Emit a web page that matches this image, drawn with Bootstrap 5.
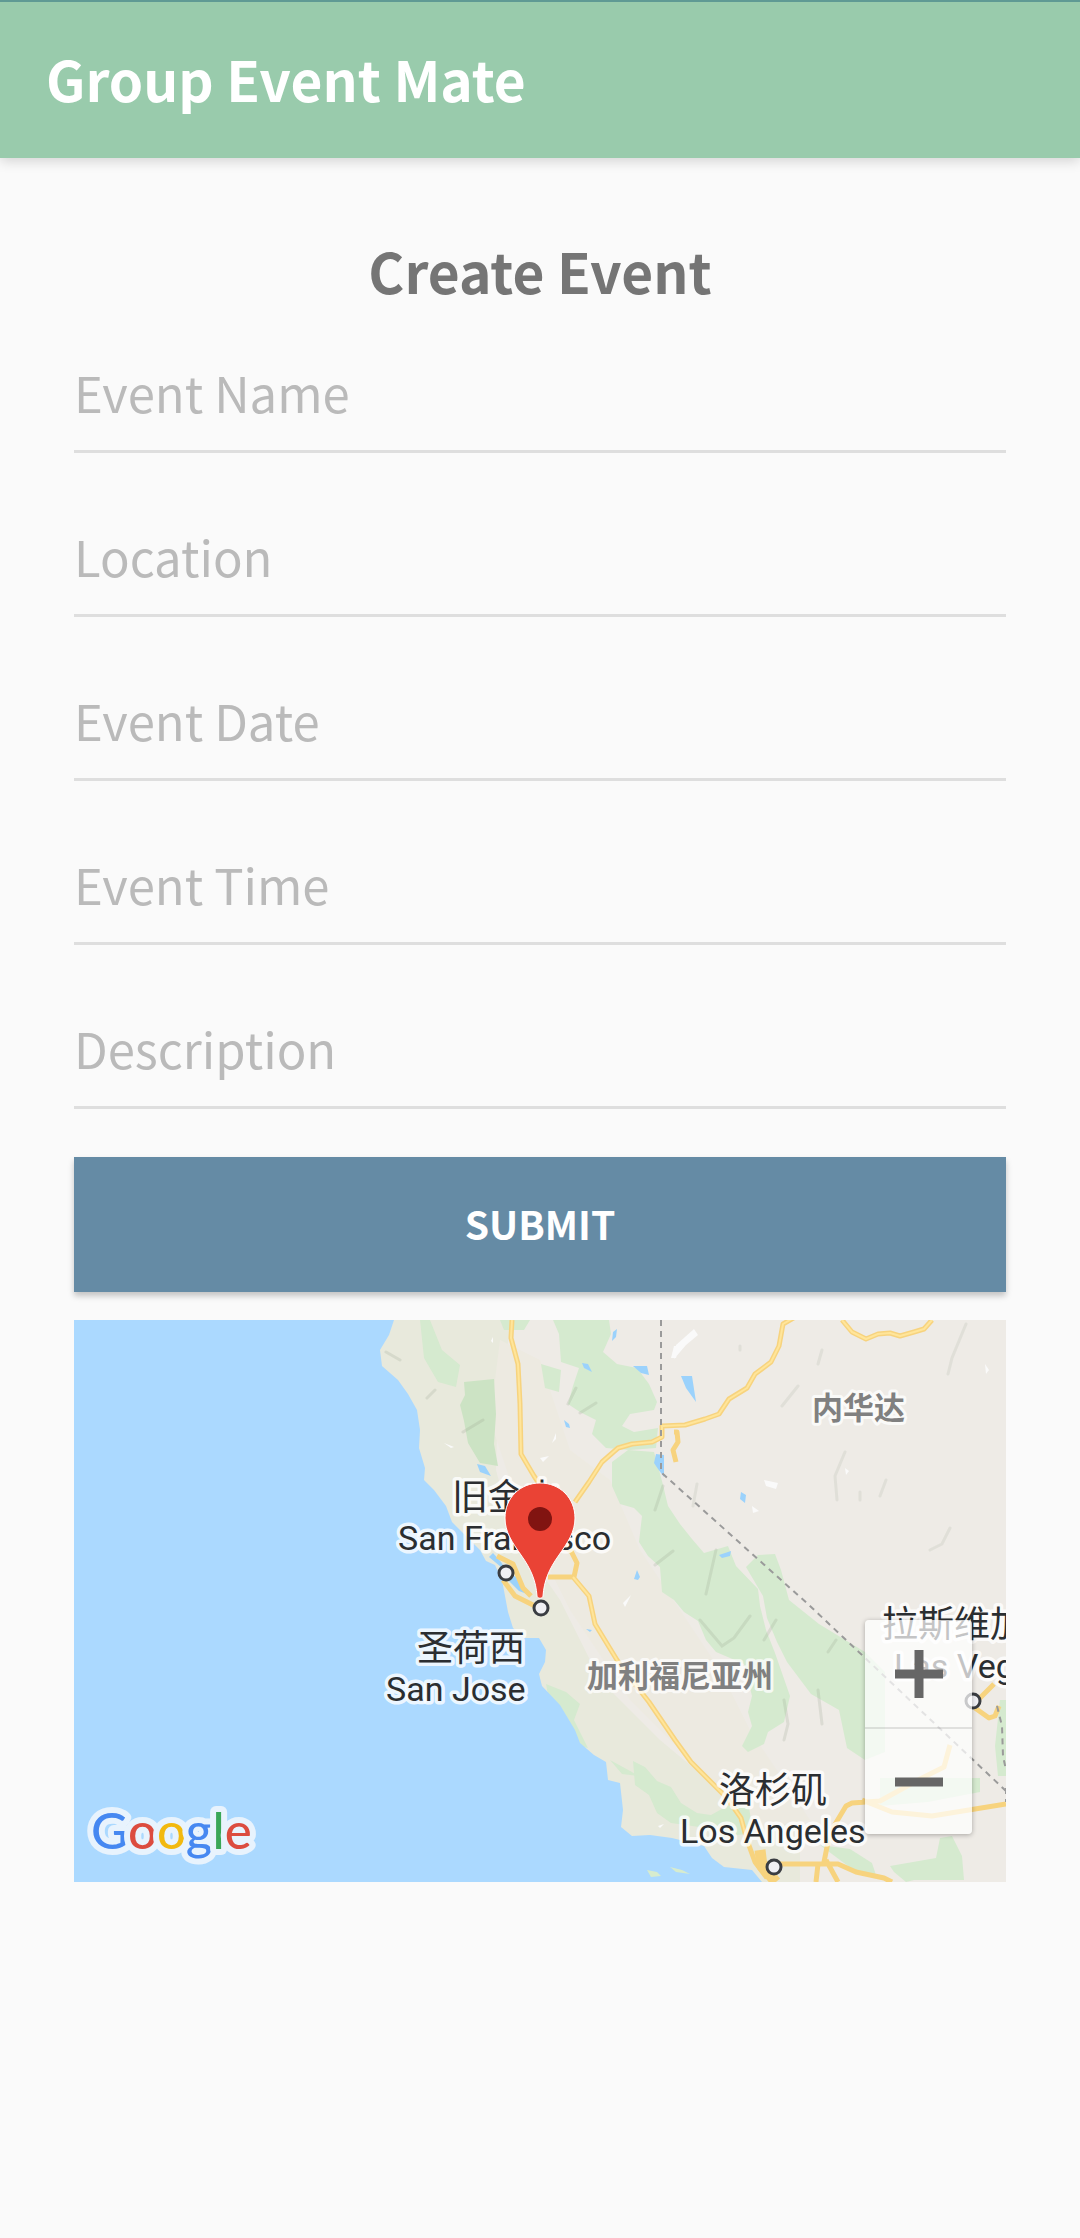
<!DOCTYPE html>
<html lang="en">
<head>
<meta charset="utf-8">
<meta name="viewport" content="width=device-width, initial-scale=1">
<title>Group Event Mate</title>
<link href="https://cdn.jsdelivr.net/npm/bootstrap@5.3.0/dist/css/bootstrap.min.css" rel="stylesheet">
<style>
  body { background: #fafafa; font-family: "Noto Sans CJK SC", "Noto Sans", sans-serif; }
  .app-bar { background: #99cbac; border-top: 2px solid #5f9a94; padding: 36px 46px 40px; box-shadow: 0 3px 12px rgba(0,0,0,.16); }
  .app-title { color: #fff; font-size: 55px; font-weight: 700; line-height: 80px; }
  .page-main { padding: 72px 74px 0; }
  .page-title { color: #757575; font-size: 55px; font-weight: 700; line-height: 80px; }
  .field { display: grid; margin-top: 48px; }
  .field:first-of-type { margin-top: 27px; }
  .field > * { grid-area: 1 / 1; }
  .line-input, .line-input:focus { background: transparent; border: 0; border-bottom: 3px solid #dedede; border-radius: 0; box-shadow: none; color: #555; font-size: 49px; height: 116px; line-height: 74px; padding: 0; }
  .line-hint { color: #bababa; font-size: 49px; line-height: 74px; padding-top: 18px; cursor: text; justify-self: start; z-index: 1; }
  .line-input:not(:placeholder-shown) + .line-hint { display: none; }
  .submit-btn { background: #658ba5; border: 0; border-radius: 0; box-shadow: 0 4px 6px rgba(0,0,0,.22); color: #fff; font-size: 39px; font-weight: 700; line-height: 60px; padding: 36px 0 39px; margin-top: 48px; }
  .submit-btn:hover { background: #587c95; color: #fff; }
  .event-map { margin-top: 28px; }
  .map-svg { display: block; height: auto; width: 100%; }
  .zoom-box { bottom: 48px; border-radius: 4px; box-shadow: 0 1px 5px rgba(0,0,0,.3); right: 34px; width: 107px; }
  .zoom-btn { background: rgba(255,255,255,.72); border: 0; height: 107px; padding: 0; }
  .zoom-btn + .zoom-btn { border-top: 2px solid rgba(0,0,0,.1); }
  .city { fill: #2b2e31; font-family: Roboto, "Noto Sans CJK SC", sans-serif; font-size: 34px; stroke: #fff; stroke-opacity: .8; stroke-width: 7px; stroke-linejoin: round; paint-order: stroke; }
  .city-cjk { font-size: 36px; }
  .state { fill: #808080; font-family: "Noto Sans CJK SC", sans-serif; font-size: 31px; font-weight: 700; stroke: #fff; stroke-opacity: .75; stroke-width: 6px; stroke-linejoin: round; paint-order: stroke; }
  .logo-word { font-family: Lato, sans-serif; font-size: 51px; font-weight: 500; stroke: #e8f3fd; stroke-width: 12px; stroke-linejoin: round; paint-order: stroke; }
</style>
<script src="https://cdn.jsdelivr.net/npm/bootstrap@5.3.0/dist/js/bootstrap.bundle.min.js"></script>
</head>
<body>
<header class="app-bar d-flex align-items-center">
  <span class="app-title">Group Event Mate</span>
</header>
<main class="page-main">
  <h1 class="page-title text-center m-0">Create Event</h1>
  <form>
    <div class="field"><input id="eventName" class="form-control line-input" type="text" placeholder=" "><label class="line-hint" for="eventName">Event Name</label></div>
    <div class="field"><input id="eventLocation" class="form-control line-input" type="text" placeholder=" "><label class="line-hint" for="eventLocation">Location</label></div>
    <div class="field"><input id="eventDate" class="form-control line-input" type="text" placeholder=" "><label class="line-hint" for="eventDate">Event Date</label></div>
    <div class="field"><input id="eventTime" class="form-control line-input" type="text" placeholder=" "><label class="line-hint" for="eventTime">Event Time</label></div>
    <div class="field"><input id="eventDescription" class="form-control line-input" type="text" placeholder=" "><label class="line-hint" for="eventDescription">Description</label></div>
    <button type="submit" class="btn submit-btn w-100">SUBMIT</button>
  </form>
  <section class="event-map position-relative overflow-hidden" aria-label="Map">
    <svg class="map-svg" viewBox="74 1320 932 562">
      <rect x="74" y="1320" width="932" height="562" fill="#eeebe6"/>
      <!-- coastal hills -->
      <path fill="#e8e9dc" d="M394 1320H512L498 1400 496 1470 512 1530 560 1600 600 1680 660 1740 720 1790 800 1830 800 1882H640L400 1500 370 1350Z"/>
      <path fill="#edeae1" d="M500 1340l40 20 30 90 40 30 30 70 40 60 40 60 30 60 60 90-60 10-50-60-70-70-60-90-50-100-30-90Z"/>
      <!-- forests -->
      <g fill="#d5eacf">
        <path d="M430 1320l12 30 18 15-4 22-18-5-14-24-4-38Z"/>
        <path fill="#cce3c4" d="M464 1382l30-3 2 35-2 30 4 22-18-3-12-20-4-22-4-16 5-10Z"/>
        <path d="M500 1320h30l-6 10h-20Z"/>
        <path d="M553 1320h56l2 14-8 18 14 12 20 4 12 16 8 18-3 8-24 4-8 12 12 6 24-4-2 20-26 2-24-2-14-14 4-14-16-8-12-8 5-18 6-18-18-6-2-28Z"/>
        <path d="M541 1364l20 6-2 22-14-4Z"/>
        <path d="M612 1462L628 1450 654 1452 662 1481 668 1506 680 1524 692 1539 704 1553 728 1546 736 1566 758 1589 760 1606 766 1630 775 1653 790 1696 784 1722 768 1732 764 1744 748 1752 742 1746 752 1726 748 1712 752 1696 744 1664 716 1652 706 1640 698 1621 684 1612 674 1600 662 1592 660 1567 648 1556 639 1542 642 1516 634 1508 620 1504 612 1486Z"/>
        <path d="M746 1567l12-12 17-1 6 16 8 30 30 24 46 28 20 20v80l-20 8-18-12-8-38-28-16-24-32-10-20-10-24-4-22Z"/>
        <path d="M546 1684l20 8 14 12-6 16 14 28-12-2-24-30Z"/>
        <path d="M633 1761l12 6 12 14 14 6 10 16 16 10 14 2 18-10 20 2 4 26-30 4-24-10-28-4-14-10-8-18-14-10Z"/>
        <path d="M610 1760l22 12 6 4-16-2ZM880 1778h100v14l-52 10-48 4ZM1000 1700h6v76h-8l-3-30ZM890 1866l46-8 4-20 12-2 10 20 2 24h-50l-8 2-12-10Z"/>
        <path d="M820 1845l30 4 22 14 4 12-24-6Z"/>
      </g>
      <!-- relief -->
      <g fill="none" stroke="#8f9b86" stroke-opacity=".2" stroke-width="3" stroke-linecap="round">
        <path d="M386 1352l14 8M427 1398l8-8M463 1432l20-12M576 1388l-8 16M580 1413l16-10M663 1486l-8 24M655 1565l18-14M716 1550l-10 44M700 1620l22 26 12-8 16-22M764 1640l12-20M818 1690l4 34M784 1700l4 24-4 16M836 1640l-8 12"/>
        <path stroke-opacity=".14" d="M966 1324l-14 34-4 16M822 1350l-4 14M798 1386l-16 20M845 1452l-10 24 2 24M886 1480l-6 16M740 1346v4M950 1528l-8 16-12 6M860 1492v8M697 1484l-4 22"/>
      </g>
      <path fill="#fafafa" d="M676 1345l18-16 4 6-12 10-12 14ZM674 1346h6l-4 12h-5ZM764 1480l14 3-2 6-10-3ZM985 1364l4 6-3 4ZM752 1506l7 5-6 2ZM444 1443l10 4-3 1ZM491 1341l2-4v6ZM556 1433l-4 10 4-4ZM540 1458l9-2-6 6ZM623 1603l8-8-6 12ZM845 1468l4 3-3 4ZM658 1826l6-2-4 4Z"/>
      <!-- ocean -->
      <path fill="#abd9ff" d="M74 1320H394L389 1335 380 1350 382 1366 398 1380 408 1394 417 1410 420 1430 419 1448 425 1468 424 1480 434 1490 446 1506 452 1522 465 1535 480 1550 486 1561 495 1565 502 1580 508 1612 513 1628 524 1638H539L546 1650 545 1662 539 1674 542 1686 560 1705 575 1730 580 1743 594 1755 606 1762 608 1780 620 1783 623 1810 621 1827 632 1836 650 1835 672 1838 704 1846 712 1858 724 1867 752 1870 762 1882H74Z"/>
      <g fill="#d7ecce"><path d="M647 1870l10 2 4 4-10 1ZM670 1867l12 3 8 4-14-2Z"/></g>
      <!-- lakes and bay -->
      <g fill="#9bd2fc">
        <path d="M477 1464l8 2 6 10-11-4ZM613 1332l4-3-1 8-4 4ZM582 1363l6 1 4 8-8-4ZM633 1366h14l2 9-8-2ZM681 1376h11l4 26-10-14ZM656 1454l8 1v22l-6-8-4-6ZM564 1420l5 4 1 4-4-1ZM741 1492l5 3-1 8-5-4ZM719 1555l12-4-1 5-8 2ZM637 1570l3 7-2 3-4-1ZM586 1629l6 1-2 2Z"/>
        <path d="M493 1553l8 9 8 12 10 4 8 16-8-3-12-12-6-12-12-10Z"/>
      </g>
      <!-- roads -->
      <g fill="none" stroke-linejoin="round">
        <g stroke="#f7d37e" stroke-width="5">
          <path d="M512 1320l-1 18 7 26 2 40 1 50 13 22 20 30M575 1502l14-20 13-20 16-14 14-4 20-2 10-5v-11l23-1 20-6 14-5 10-15 18-11 8-14 16-12 8-16 4-22 14-8 6-13"/>
          <path d="M842 1320l10 12 14 7 12-5 12-1 10 3 14-4 10-3 8-9M674 1432h3l1 10-5 8 3 12"/>
          <path d="M497 1556l16 8 10 24 8 8M503 1580l12 16 20 10M548 1577h26l3-14-6-12-14-8M573 1577l16 19 6 28 22 36 10 14 22 28 26 38 16 22 36 36 14 20 6 22 8 22 12 16"/>
          <path d="M762 1864h76l18 8 28 6 8 4M818 1864l-2 18M826 1860l12 22M824 1862l4-20 6-16 12-20 6-3 28-2 40-22 24-12 6-22M862 1800l30 12 40 4 74-12M978 1700l16-16M975 1708l14 10 6-2 4-10"/>
          <path stroke-width="11" d="M760 1850l2 16 14 16"/>
        </g>
        <path stroke="#ffe59a" stroke-width="2" d="M512 1320l-1 18 7 26 2 40 1 50 13 22 20 30M575 1502l14-20 13-20 16-14 14-4 20-2 10-5v-11l23-1 20-6 14-5 10-15 18-11 8-14 16-12 8-16 4-22 14-8 6-13M842 1320l10 12 14 7 12-5 12-1 10 3 14-4 10-3 8-9M573 1577l16 19 6 28 22 36 10 14 22 28 26 38 16 22 36 36 14 20 6 22"/>
      </g>
      <!-- state lines -->
      <g fill="none" stroke="#9a9a9a" stroke-width="2" stroke-dasharray="6 5">
        <path d="M661 1320v152l2 2 146 131 197 186M997 1706l5 20 1 30 3 14M1006 1788v14"/>
      </g>
      <g fill="#f0f0f4" stroke="#3a3d42" stroke-width="3">
        <circle cx="506" cy="1573" r="7"/><circle cx="541" cy="1608" r="7"/><circle cx="774" cy="1867" r="7"/><circle cx="973" cy="1701" r="7"/>
      </g>
      <text class="city city-cjk" x="452" y="1510">旧金山</text>
      <text class="city" x="398" y="1550">San Francisco</text>
      <text class="city city-cjk" x="417" y="1661">圣荷西</text>
      <text class="city" x="386" y="1701">San Jose</text>
      <text class="city city-cjk" x="719" y="1803">洛杉矶</text>
      <text class="city" x="680" y="1843">Los Angeles</text>
      <text class="city city-cjk" x="882" y="1637">拉斯维加</text>
      <text class="city" x="894" y="1678">Las Vegas</text>
      <text class="state" x="812" y="1419">内华达</text>
      <text class="state" x="587" y="1687">加利福尼亚州</text>
      <path fill="#ea4335" stroke="#fff" stroke-width="1" d="M540 1483c-20 0-35 15-35 35 0 14 7 24 16 37 10 14 15 26 16 41 0 3 6 3 6 0 1-15 6-27 16-41 9-13 16-23 16-37 0-20-15-35-35-35Z"/>
      <circle cx="540" cy="1519" r="12" fill="#811411"/>
      <text class="logo-word" x="91" y="1849"><tspan fill="#4688f1">G</tspan><tspan fill="#dc4c3f">o</tspan><tspan fill="#f2b90f">o</tspan><tspan fill="#4688f1">g</tspan><tspan fill="#3aa757">l</tspan><tspan fill="#dc4c3f">e</tspan></text>
    </svg>
    <div class="zoom-box position-absolute d-flex flex-column overflow-hidden">
      <button type="button" class="zoom-btn d-flex align-items-center justify-content-center" aria-label="Zoom in"><svg width="48" height="48" viewBox="0 0 48 48"><path d="M24 0v48M0 24h48" stroke="#666" stroke-width="9"/></svg></button>
      <button type="button" class="zoom-btn d-flex align-items-center justify-content-center" aria-label="Zoom out"><svg width="48" height="48" viewBox="0 0 48 48"><path d="M0 24h48" stroke="#666" stroke-width="9"/></svg></button>
    </div>
  </section>
</main>
</body>
</html>
